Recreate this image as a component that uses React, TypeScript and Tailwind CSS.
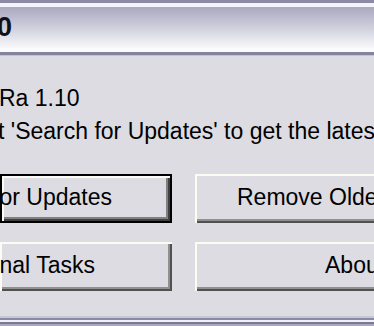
import React from 'react';

export default function App() {
  const font = { fontFamily: '"Liberation Sans", Arial, sans-serif' };
  return (
    <div className="w-[374px] h-[326px] overflow-hidden bg-[#dcdce2] flex flex-col" style={font}>
      {/* Title bar */}
      <div className="h-[56px] flex flex-col shrink-0">
        <div className="h-[3px] bg-[#8a8aa6]" />
        <div className="h-[4px] bg-[#f4f4f8]" />
        <div className="h-[41px] bg-gradient-to-b from-[#a9a9c1] via-[#cfcfdc] to-[#f8f8fb] flex items-center">
          <span className="ml-[-3px] text-[27px] font-bold text-[#101018] leading-none">0</span>
        </div>
        <div className="h-[4px] bg-[#fbfbfd]" />
        <div className="h-[3px] bg-[#84849e]" />
        <div className="h-[1px] bg-[#c4c4cc]" />
      </div>

      {/* Body */}
      <div className="flex-1 flex flex-col pt-[26px] text-[23px] leading-[33px] text-black whitespace-nowrap">
        <div className="ml-[-1px]">Ra 1.10</div>
        <div className="ml-[-2px]">t 'Search for Updates' to get the latest version.</div>

        <div className="mt-[26px] flex flex-col gap-[19px]">
          <div className="flex gap-[23px]">
            <button className="w-[172px] h-[49px] shrink-0 flex items-center justify-end pr-[58px] overflow-hidden border-2 border-black bg-[#dcdce2] shadow-[inset_2px_2px_0_#fbfbf6,inset_-2px_-2px_0_#404040,inset_-4px_-4px_0_#808080]">
              <span className="pb-[2px]">Search for Updates</span>
            </button>
            <button className="w-[260px] h-[49px] shrink-0 flex items-center justify-start pl-[42px] overflow-hidden bg-[#dcdce2] shadow-[inset_2px_2px_0_#fcfcf2,inset_-2px_-2px_0_#505050,inset_-4px_-4px_0_#909090]">
              <span className="pb-[2px]">Remove Older Versions</span>
            </button>
          </div>
          <div className="flex gap-[23px]">
            <button className="w-[172px] h-[49px] shrink-0 flex items-center justify-end pr-[77px] overflow-hidden bg-[#dcdce2] shadow-[inset_2px_2px_0_#fcfcf2,inset_-2px_-2px_0_#505050,inset_-4px_-4px_0_#909090]">
              <span className="pb-[2px]">Additional Tasks</span>
            </button>
            <button className="w-[260px] h-[49px] shrink-0 flex items-center justify-start pl-[130px] overflow-hidden bg-[#dcdce2] shadow-[inset_2px_2px_0_#fcfcf2,inset_-2px_-2px_0_#505050,inset_-4px_-4px_0_#909090]">
              <span className="pb-[2px]">About</span>
            </button>
          </div>
        </div>
      </div>

      {/* Bottom frame */}
      <div className="h-[10px] shrink-0 flex flex-col">
        <div className="h-[2px] bg-[#c8c8d2]" />
        <div className="h-[2px] bg-[#8a8aa8]" />
        <div className="h-[2px] bg-[#f0f0f6]" />
        <div className="h-[2px] bg-[#7a7a98]" />
        <div className="h-[2px] bg-[#a8a8c0]" />
      </div>
    </div>
  );
}
